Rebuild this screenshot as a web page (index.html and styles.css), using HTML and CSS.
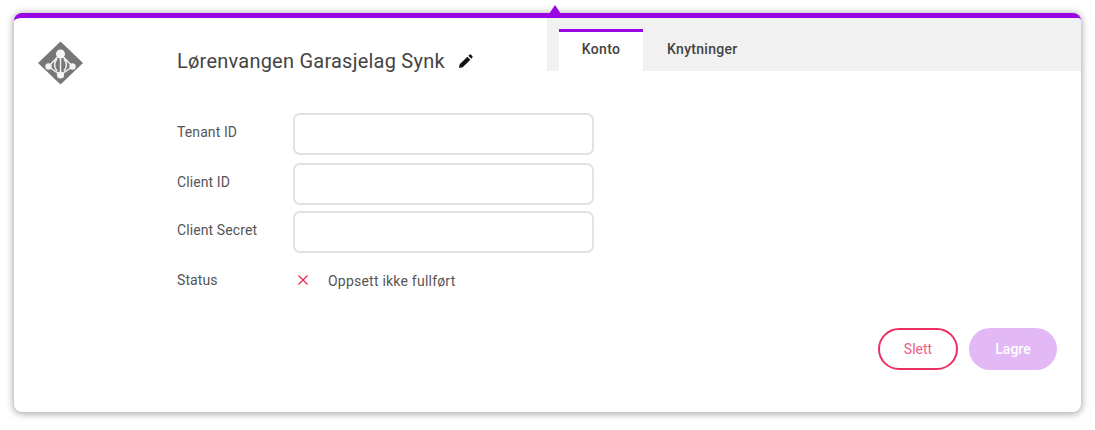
FILE: index.html
```html
<!DOCTYPE html>
<html lang="no">
<head>
<meta charset="utf-8">
<title>Lørenvangen Garasjelag Synk</title>
<link rel="stylesheet" href="styles.css">
</head>
<body>
<main class="card">
  <span class="notch"></span>
  <header class="top">
    <div class="brand">
      <svg class="logo" width="46" height="44" viewBox="0 0 46 44">
        <path class="logo-bg" d="M22.500 .5 L45 22 L22.500 43.500 L0 22 Z"/>
        <path class="logo-line" d="M22.500 13 L10.500 25.500 L22.500 34 L34.500 25.500 Z M22.500 13 V34 M19 18 C16 21.500 16 26 19 30 M26 18 C29 21.500 29 26 26 30"/>
        <circle class="logo-dot" cx="22.500" cy="13" r="4.500"/>
        <circle class="logo-dot" cx="10.500" cy="25.500" r="3.200"/>
        <circle class="logo-dot" cx="34.500" cy="25.500" r="3.200"/>
        <circle class="logo-dot" cx="22.500" cy="34" r="3.600"/>
      </svg>
      <h1 class="title">Lørenvangen Garasjelag Synk</h1>
      <svg class="pencil" width="15" height="15" viewBox="0 0 16 16">
        <path d="M1 15 L1.800 11 L10 2.800 L13.200 6 L5 14.200 Z M11 1.800 L12.200 .7 Q13 0 13.800 .7 L15.300 2.200 Q16 3 15.300 3.800 L14.200 5 Z"/>
      </svg>
    </div>
    <nav class="tabs">
      <span class="tab tab-active">Konto</span>
      <span class="tab">Knytninger</span>
    </nav>
  </header>
  <form class="form">
    <div class="row row-first"><label class="label">Tenant ID</label><input class="field" type="text"></div>
    <div class="row row-second"><label class="label">Client ID</label><input class="field" type="text"></div>
    <div class="row row-third"><label class="label">Client Secret</label><input class="field" type="text"></div>
    <div class="status">
      <span class="label">Status</span>
      <svg class="cross" width="12" height="12" viewBox="0 0 12 12"><path d="M1.500 1.500 L10.500 10.500 M10.500 1.500 L1.500 10.500"/></svg>
      <span class="status-text">Oppsett ikke fullført</span>
    </div>
  </form>
  <footer class="actions">
    <button class="btn btn-delete" type="button">Slett</button>
    <button class="btn btn-save" type="button">Lagre</button>
  </footer>
</main>
</body>
</html>
```
FILE: styles.css
```css
* { box-sizing: border-box; }
html, body { margin: 0; height: 100%; background: #fff; }
body {
  padding: 13px 14px 18px 14px;
  font-family: "Roboto", "Liberation Sans", sans-serif;
  color: #444;
  overflow: hidden;
}
.card {
  position: relative;
  width: 1067px;
  height: 399px;
  display: flex;
  flex-direction: column;
  background: #fff;
  border-top: 5px solid #9a05e3;
  border-radius: 8px;
  box-shadow: 0 1px 7px 1px rgba(0, 0, 0, .34);
}
.notch {
  position: absolute;
  left: 535px;
  top: -13px;
  width: 0;
  height: 0;
  border-left: 6px solid transparent;
  border-right: 6px solid transparent;
  border-bottom: 9px solid #9a05e3;
}
.top { display: flex; height: 53px; }
.brand { width: 533px; display: flex; align-items: flex-start; }
.logo { margin: 23px 0 0 24px; flex: none; }
.logo-bg { fill: #777; }
.logo-line { fill: none; stroke: #eee; stroke-width: 1.500; }
.logo-dot { fill: #f4f4f4; }
.title {
  margin: 28px 0 0 93px;
  font-size: 20px;
  line-height: 30px;
  font-weight: 400;
  letter-spacing: .23px;
  white-space: nowrap;
  color: #444;
}
.pencil { margin: 36px 0 0 13px; flex: none; fill: #111; }
.tabs {
  flex: 1;
  display: flex;
  align-items: flex-end;
  padding-left: 12px;
  background: #f1f1f1;
  border-top-right-radius: 3px;
}
.tab {
  height: 42px;
  padding: 0 24px 6px;
  display: flex;
  align-items: center;
  font-size: 14px;
  font-weight: 500;
  letter-spacing: .3px;
  color: #444;
  border-top: 3px solid transparent;
}
.tab-active { width: 84px; justify-content: center; padding: 0 0 6px; background: #fff; border-top-color: #9a05e3; }
.form { padding: 42px 0 0 163px; }
.row { display: flex; align-items: center; }
.row-second { margin-top: 8px; }
.row-third { margin-top: 6px; }
.label { width: 116px; flex: none; font-size: 14px; letter-spacing: .1px; color: #555; }
.row .label { padding-bottom: 5px; }
.field {
  width: 301px;
  height: 42px;
  border: 2px solid #e2e2e2;
  border-radius: 7px;
  background: #fff;
  outline: none;
}
.status { display: flex; align-items: center; margin-top: 17px; height: 20px; }
.cross { margin-left: 4px; flex: none; fill: none; stroke: #ee2a4f; stroke-width: 1.300; }
.status-text { margin-left: 19px; padding-top: 2px; font-size: 14px; letter-spacing: .22px; color: #555; }
.actions {
  margin-top: auto;
  padding: 0 24px 42px 0;
  display: flex;
  justify-content: flex-end;
  gap: 11px;
}
.btn {
  height: 42px;
  border-radius: 21px;
  font-family: inherit;
  font-size: 14px;
  padding: 0;
}
.btn-delete { width: 80px; background: #fff; border: 2px solid #ec2f63; color: #ef6085; }
.btn-save { width: 88px; background: #e2b8f5; border: 0; color: #fff; font-weight: 500; }
```
